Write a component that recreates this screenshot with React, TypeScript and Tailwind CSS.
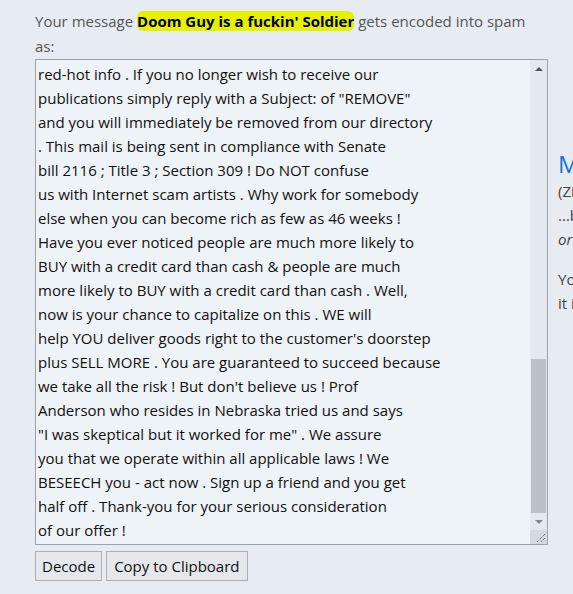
const lines = [
  'red-hot info . If you no longer wish to receive our',
  'publications simply reply with a Subject: of "REMOVE"',
  'and you will immediately be removed from our directory',
  '. This mail is being sent in compliance with Senate',
  'bill 2116 ; Title 3 ; Section 309 ! Do NOT confuse',
  'us with Internet scam artists . Why work for somebody',
  'else when you can become rich as few as 46 weeks !',
  'Have you ever noticed people are much more likely to',
  'BUY with a credit card than cash & people are much',
  'more likely to BUY with a credit card than cash . Well,',
  'now is your chance to capitalize on this . WE will',
  "help YOU deliver goods right to the customer's doorstep",
  'plus SELL MORE . You are guaranteed to succeed because',
  "we take all the risk ! But don't believe us ! Prof",
  'Anderson who resides in Nebraska tried us and says',
  '"I was skeptical but it worked for me" . We assure',
  'you that we operate within all applicable laws ! We',
  'BESEECH you - act now . Sign up a friend and you get',
  'half off . Thank-you for your serious consideration',
  'of our offer !',
]

function Scrollbar() {
  return (
    <div className="flex w-[17px] flex-col bg-[#e3e9ee]">
      <div className="flex h-[17px] items-center justify-center">
        <div className="h-0 w-0 border-x-[4px] border-b-[4px] border-x-transparent border-b-[#555]" />
      </div>
      <div className="flex flex-1 flex-col justify-end px-[1px]">
        <div className="h-[154px] bg-[#bcc1c5]" />
      </div>
      <div className="flex h-[17px] items-center justify-center">
        <div className="h-0 w-0 border-x-[4px] border-t-[4px] border-x-transparent border-t-[#888]" />
      </div>
      <div className="relative h-[14px] bg-[#d4dade]">
        <svg className="absolute bottom-[1px] right-[1px]" width="12" height="12" viewBox="0 0 12 12">
          <path d="M11 3 L3 11 M11 7 L7 11" stroke="#444" strokeWidth="1" strokeDasharray="1 1" />
        </svg>
      </div>
    </div>
  )
}

export default function App() {
  return (
    <div
      className="flex h-[594px] w-[573px] overflow-hidden bg-[#e6ecf2] text-[15px]"
      style={{ fontFamily: '"Open Sans", "Noto Sans", sans-serif' }}
    >
      <div className="w-[548px] shrink-0 pl-[35px] pt-[9px]">
        <p className="leading-[25px] text-[#555]">
          Your message{' '}
          <span className="rounded-[6px] bg-[#e6f000] font-bold text-black">
            Doom Guy is a fuckin' Soldier
          </span>{' '}
          gets encoded into spam as:
        </p>
        <div className="flex h-[486px] border border-[#9aa3ab] bg-[#eef3f7]">
          <div className="flex-1 overflow-hidden pl-[2px] pt-[2px] text-[#111]">
            {lines.map((l, i) => (
              <div key={i} className="h-[24px] whitespace-nowrap leading-[24px]">
                {l}
              </div>
            ))}
          </div>
          <Scrollbar />
        </div>
        <div className="mt-[6px] flex gap-[4px]">
          <button className="h-[30px] border border-[#adadad] bg-[#e4e8ec] px-[6px] text-[#111]">
            Decode
          </button>
          <button className="h-[30px] border border-[#adadad] bg-[#e4e8ec] px-[7px] text-[#111]">
            Copy to Clipboard
          </button>
        </div>
      </div>
      <div className="ml-[10px] shrink-0 pt-[149px] text-[#444]">
        <div className="text-[24px] leading-[30px] text-[#1a73d9]">Mailing</div>
        <div className="leading-[24px]">(Zip</div>
        <div className="leading-[24px]">...but</div>
        <div className="italic leading-[24px]">or</div>
        <div className="mt-[16px] leading-[24px]">You</div>
        <div className="leading-[24px]">it is</div>
      </div>
    </div>
  )
}
